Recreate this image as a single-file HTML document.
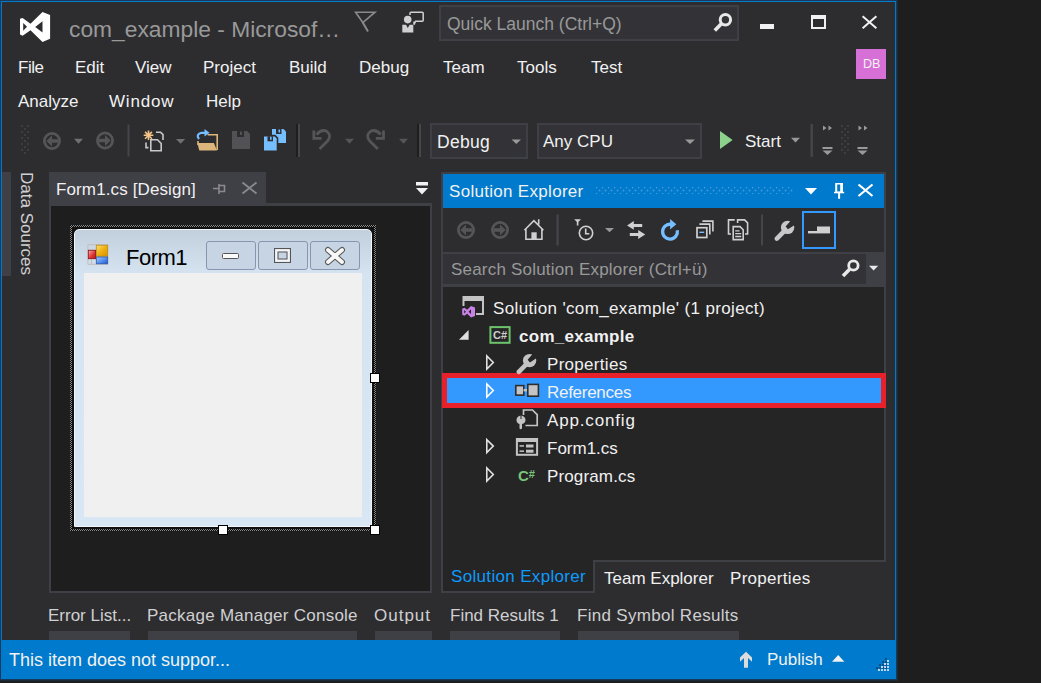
<!DOCTYPE html>
<html><head><meta charset="utf-8">
<style>
*{margin:0;padding:0;box-sizing:border-box}
html,body{width:1041px;height:683px;overflow:hidden;background:#1e1e1e;font-family:"Liberation Sans",sans-serif;}
.a{position:absolute}
svg{position:absolute;overflow:visible}
.t{position:absolute;white-space:nowrap;color:#f1f1f1;font-size:17px;line-height:20px}
#win{position:absolute;left:1px;top:1px;width:895px;height:678px;background:#2d2d30;border:1px solid #007acc;box-shadow:0 0 0 1px #17395a,0 0 0 2px #1a2c3a;}
</style></head><body>
<div id="win"></div>

<!-- ===== TITLE BAR ===== -->
<svg style="left:0;top:0" width="1" height="1">
 <path fill="#fff" fill-rule="evenodd" d="M42.5 12 L50.1 15 L50.1 38.8 L42.5 42 L30.5 30.3 L22.6 35.8 L20 34.6 L20 18.8 L22.6 18 L30.5 23.8 Z M23.2 22.9 L23.2 30.8 L27 26.8 Z M42.5 21.2 L42.5 32.6 L35.2 26.9 Z"/>
</svg>
<div class="t" style="left:69px;top:16px;font-size:22.8px;line-height:26px;color:#999">com_example - Microsof…</div>

<!-- feedback flag -->
<svg style="left:0;top:0" width="1" height="1">
 <path fill="none" stroke="#8a8a8a" stroke-width="1.6" d="M355.6 12.2 H375 L362.8 22.5 Z"/>
 <path fill="none" stroke="#8a8a8a" stroke-width="2" d="M362.8 22.5 L368 31.5"/>
</svg>
<!-- person chat -->
<svg style="left:0;top:0" width="1" height="1">
 <circle cx="407.7" cy="19.6" r="3.8" fill="#d0d0d0"/>
 <path fill="#d0d0d0" d="M402.3 24.8 H406 L407.8 28 L409.6 24.8 H413.3 V32.6 H402.3 Z"/>
 <path fill="none" stroke="#d0d0d0" stroke-width="1.5" d="M410 15 V13.3 Q410 12.3 411 12.3 H422.2 Q423.2 12.3 423.2 13.3 V20.2 Q423.2 21.2 422.2 21.2 H415.6 L414 24.6 V21.5"/>
</svg>

<!-- quick launch -->
<div class="a" style="left:439px;top:5px;width:300px;height:36px;background:#333337;border:2px solid #3f3f46"></div>
<div class="t" style="left:447px;top:14px;color:#999;font-size:17.5px">Quick Launch (Ctrl+Q)</div>
<svg style="left:0;top:0" width="1" height="1">
 <circle cx="725.4" cy="19.8" r="5.2" fill="none" stroke="#e8e8e8" stroke-width="3"/>
 <path d="M721.4 23.8 L714.8 30.4" stroke="#e8e8e8" stroke-width="3.6"/>
</svg>
<!-- window buttons -->
<div class="a" style="left:760px;top:24px;width:14px;height:5px;background:#f1f1f1"></div>
<div class="a" style="left:811px;top:15px;width:15px;height:14px;border:2px solid #f1f1f1;border-top-width:4px"></div>
<svg style="left:0;top:0" width="1" height="1">
 <path d="M862.6 16.2 L876.4 28.2 M876.4 16.2 L862.6 28.2" stroke="#f1f1f1" stroke-width="2"/>
</svg>

<!-- ===== MENU ===== -->
<div class="t" style="left:18px;top:58px;letter-spacing:-0.5px">File</div>
<div class="t" style="left:75px;top:58px">Edit</div>
<div class="t" style="left:135px;top:58px">View</div>
<div class="t" style="left:203px;top:58px">Project</div>
<div class="t" style="left:289px;top:58px">Build</div>
<div class="t" style="left:359px;top:58px">Debug</div>
<div class="t" style="left:443px;top:58px">Team</div>
<div class="t" style="left:517px;top:58px">Tools</div>
<div class="t" style="left:591px;top:58px">Test</div>
<div class="t" style="left:18px;top:92px">Analyze</div>
<div class="t" style="left:109px;top:92px;letter-spacing:0.8px">Window</div>
<div class="t" style="left:206px;top:92px">Help</div>
<div class="a" style="left:856px;top:49px;width:30px;height:30px;background:#d670d6"></div>
<div class="t" style="left:863px;top:54px;font-size:12.6px">DB</div>

<!-- ===== TOOLBAR ===== -->
<svg style="left:0;top:0" width="1" height="1">
 <g fill="#3e3e42">
  <rect x="21" y="125" width="2" height="2"/><rect x="27" y="125" width="2" height="2"/>
  <rect x="24" y="128" width="2" height="2"/>
  <rect x="21" y="131" width="2" height="2"/><rect x="27" y="131" width="2" height="2"/>
  <rect x="24" y="134" width="2" height="2"/>
  <rect x="21" y="137" width="2" height="2"/><rect x="27" y="137" width="2" height="2"/>
  <rect x="24" y="140" width="2" height="2"/>
  <rect x="21" y="143" width="2" height="2"/><rect x="27" y="143" width="2" height="2"/>
  <rect x="24" y="146" width="2" height="2"/>
  <rect x="21" y="149" width="2" height="2"/><rect x="27" y="149" width="2" height="2"/>
  <rect x="24" y="152" width="2" height="2"/>
 </g>
 <!-- back -->
 <circle cx="52" cy="141" r="7.6" fill="none" stroke="#555558" stroke-width="2.8"/>
 <path fill="#555558" d="M46.3 141 L52 135.6 V139.2 H58 V142.8 H52 V146.4 Z"/>
 <path fill="#707074" d="M74 138.7 H83 L78.5 143.7 Z"/>
 <!-- forward -->
 <circle cx="105" cy="140.5" r="7.6" fill="none" stroke="#555558" stroke-width="2.8"/>
 <path fill="#555558" d="M110.7 140.5 L105 135.1 V138.7 H99 V142.3 H105 V145.9 Z"/>
 <!-- sep -->
 <rect x="127.5" y="124.5" width="2" height="32" fill="#46464a"/>
 <!-- new project -->
 <g stroke="#f2c587" stroke-width="1.6">
  <path d="M148.5 130.5 V140.1 M143.7 135.3 H153.3 M145.1 131.9 L151.9 138.7 M151.9 131.9 L145.1 138.7"/>
 </g>
 <path fill="none" stroke="#c8c8c8" stroke-width="1.6" d="M156 132.3 H160.6 L163 134.7 V140 M146 142.5 V147.6 H148.5"/>
 <path fill="#2d2d30" stroke="#c8c8c8" stroke-width="1.6" d="M150.8 139.8 H157.5 L161.2 143.5 V150.8 H150.8 Z"/>
 <path fill="#707074" d="M176 138.9 H185.2 L180.6 143.8 Z"/>
 <!-- open -->
 <path fill="none" stroke="#dcb67a" stroke-width="1.6" d="M207.6 134.8 H217.2 V150 M198 141 V145"/>
 <path fill="#dcb67a" d="M197.3 143 H213.9 L217 150.5 H199.3 Z"/>
 <path fill="none" stroke="#75beff" stroke-width="2.2" d="M199 139 Q195.5 134.5 201.5 132.8 H205.5"/>
 <path fill="#75beff" d="M204.5 129 L209.5 132.8 L204.5 136.6 Z"/>
 <!-- save -->
 <path fill="#525256" d="M232 131 H247 L250 134 V149 H232 Z"/>
 <rect x="237" y="131" width="7" height="6" fill="#2d2d30"/><rect x="240" y="131.5" width="2" height="3.5" fill="#525256"/>
 <!-- save all -->
 <path fill="#75beff" d="M272 129 H283.5 L286 131.5 V143 H272 Z"/>
 <rect x="276" y="129" width="5.5" height="5" fill="#2d2d30"/><rect x="278.5" y="129.5" width="1.6" height="3" fill="#75beff"/>
 <path fill="#75beff" stroke="#2d2d30" stroke-width="1.6" d="M263.2 135.6 H275 L277.5 138.1 V151.2 H263.2 Z"/>
 <rect x="267.5" y="136.3" width="5.5" height="5" fill="#2d2d30"/><rect x="270" y="136.8" width="1.6" height="3" fill="#75beff"/>
 <!-- sep -->
 <rect x="296" y="124" width="2" height="33" fill="#1e1e1e"/><rect x="298" y="124" width="2" height="33" fill="#46464a"/>
 <!-- undo -->
 <path fill="none" stroke="#555558" stroke-width="2.8" d="M319.5 149 L327.5 141 Q332 135.5 327 131.5 Q322 128.5 316.5 134.5"/>
 <path fill="none" stroke="#555558" stroke-width="2.8" stroke-linejoin="miter" d="M313.8 130.5 V138.3 H321.5"/>
 <path fill="#555558" d="M345 138.8 H354 L349.5 143.8 Z"/>
 <!-- redo -->
 <path fill="none" stroke="#555558" stroke-width="2.8" d="M377.8 149 L369.8 141 Q365.3 135.5 370.3 131.5 Q375.3 128.5 380.8 134.5"/>
 <path fill="none" stroke="#555558" stroke-width="2.8" stroke-linejoin="miter" d="M383.5 130.5 V138.3 H375.8"/>
 <path fill="#555558" d="M399 138.8 H408 L403.5 143.8 Z"/>
 <!-- sep -->
 <rect x="417" y="124" width="2" height="33" fill="#1e1e1e"/><rect x="419" y="124" width="2" height="33" fill="#46464a"/>
</svg>

<!-- combos -->
<div class="a" style="left:430px;top:123px;width:98px;height:36px;background:#333337;border:2px solid #3f3f46"></div>
<div class="t" style="left:437px;top:132px;font-size:17.5px;letter-spacing:0.3px">Debug</div>
<svg style="left:0;top:0" width="1" height="1"><path fill="#999" d="M511.6 139.5 H521 L516.3 143.9 Z"/></svg>
<div class="a" style="left:537px;top:123px;width:165px;height:36px;background:#333337;border:2px solid #3f3f46"></div>
<div class="t" style="left:543px;top:132px">Any CPU</div>
<svg style="left:0;top:0" width="1" height="1"><path fill="#999" d="M685 139.5 H695 L690 143.9 Z"/></svg>
<svg style="left:0;top:0" width="1" height="1">
 <path fill="#8cd28c" d="M720 131 L732.6 140 L720 149 Z"/>
 <path fill="#999" d="M791 137.8 H800 L795.5 142.5 Z"/>
 <rect x="810.5" y="124" width="2.4" height="33" fill="#46464a"/>
 <g fill="#999">
  <path d="M823 125.5 L826.5 128 L823 130.5 Z M828.5 125.5 L832 128 L828.5 130.5 Z"/>
  <rect x="822.5" y="147" width="10" height="2"/>
  <path d="M822.5 150.5 H832.5 L827.5 155 Z"/>
  <path d="M858.5 125.5 L862 128 L858.5 130.5 Z M864 125.5 L867.5 128 L864 130.5 Z"/>
  <rect x="857.5" y="147" width="10" height="2"/>
  <path d="M857.5 150.5 H867.5 L862.5 155 Z"/>
 </g>
 <g fill="#3e3e42">
  <rect x="841" y="125" width="2" height="2"/><rect x="847" y="125" width="2" height="2"/>
  <rect x="844" y="128" width="2" height="2"/>
  <rect x="841" y="131" width="2" height="2"/><rect x="847" y="131" width="2" height="2"/>
  <rect x="844" y="134" width="2" height="2"/>
  <rect x="841" y="137" width="2" height="2"/><rect x="847" y="137" width="2" height="2"/>
  <rect x="844" y="140" width="2" height="2"/>
  <rect x="841" y="143" width="2" height="2"/><rect x="847" y="143" width="2" height="2"/>
  <rect x="844" y="146" width="2" height="2"/>
  <rect x="841" y="149" width="2" height="2"/><rect x="847" y="149" width="2" height="2"/>
  <rect x="844" y="152" width="2" height="2"/>
 </g>
</svg>
<div class="t" style="left:745px;top:132px">Start</div>

<!-- ===== LEFT STRIP ===== -->
<div class="a" style="left:2px;top:172px;width:9px;height:104px;background:#3f3f46"></div>
<div class="t" style="left:16px;top:172px;writing-mode:vertical-rl;color:#d0d0d0">Data Sources</div>

<!-- ===== DOC WELL ===== -->
<div class="a" style="left:49px;top:172px;width:217px;height:34px;background:#3f3f46"></div>
<div class="t" style="left:56px;top:180px;letter-spacing:0.12px">Form1.cs [Design]</div>
<svg style="left:0;top:0" width="1" height="1">
 <path fill="none" stroke="#8a8a8e" stroke-width="1.6" d="M213 188.5 H219 M219 184 V194 M219 185.5 H224.5 V191.5 H219"/>
 <path d="M242.5 182.5 L256.5 193.5 M256.5 182.5 L242.5 193.5" stroke="#8a8a8e" stroke-width="1.8"/>
 <rect x="416" y="182" width="12" height="3.5" fill="#f1f1f1"/>
 <path fill="#f1f1f1" d="M416 188 H428 L422 194.5 Z"/>
</svg>
<div class="a" style="left:49px;top:203px;width:383px;height:390px;background:#1e1e1e;border-left:2px solid #3f3f46;border-top:3px solid #3f3f46;border-right:2px solid #3f3f46;border-bottom:2px solid #3f3f46"></div>

<!-- form -->
<svg style="left:0;top:0" width="1" height="1"><defs><pattern id="ck" x="0" y="0" width="2" height="2" patternUnits="userSpaceOnUse"><rect width="2" height="2" fill="#0a0a0a"/><rect x="0" y="0" width="1" height="1" fill="#8a8a8a"/><rect x="1" y="1" width="1" height="1" fill="#8a8a8a"/></pattern></defs>
<rect x="70" y="225" width="306" height="306" fill="#111"/>
<path fill="url(#ck)" fill-rule="evenodd" d="M70 225 H376 V531 H70 Z M72 227 V529 H374 V227 Z"/></svg>
<div class="a" style="left:74px;top:229px;width:298px;height:298px;border-radius:5px 5px 0 0;border:1px solid #f2f6fb;background:linear-gradient(#c2d0de,#d6e3f1 45px,#d9e6f3)"></div>
<div class="a" style="left:84px;top:273px;width:278px;height:244px;background:#f0f0f0"></div>
<svg style="left:0;top:0" width="1" height="1">
 <defs>
 <linearGradient id="gy" x1="0" y1="0" x2="1" y2="1"><stop offset="0" stop-color="#fbe27a"/><stop offset=".5" stop-color="#f0b010"/><stop offset="1" stop-color="#d89000"/></linearGradient>
 <linearGradient id="gr" x1="0" y1="0" x2="1" y2="1"><stop offset="0" stop-color="#f8b0b0"/><stop offset=".6" stop-color="#e03030"/><stop offset="1" stop-color="#c01818"/></linearGradient>
 <linearGradient id="gb" x1="0" y1="0" x2="1" y2="1"><stop offset="0" stop-color="#a8c8fa"/><stop offset=".6" stop-color="#4a88ea"/><stop offset="1" stop-color="#2050c0"/></linearGradient>
</defs>
 <path fill="none" stroke="#c4bcbc" stroke-width="1" d="M87.9 244.7 H107.5 V264.3 H87.9 Z M87.9 250 H96 M91.5 259 V264.3"/>
 <rect x="96.3" y="245.2" width="11.4" height="11" fill="url(#gy)" stroke="#b88a10" stroke-width="0.8"/>
 <rect x="96.3" y="257" width="11.4" height="6.8" fill="url(#gb)" stroke="#2a58b0" stroke-width="0.8"/>
 <rect x="88.3" y="250.3" width="7.3" height="8.4" fill="url(#gr)" stroke="#8a1010" stroke-width="0.8"/>
</svg>
<div class="t" style="left:126px;top:246px;color:#000;font-size:22px;line-height:24px;letter-spacing:-0.5px">Form1</div>
<div class="a" style="left:206px;top:241px;width:50px;height:29px;border:1px solid #8796b0;border-radius:3px;background:#c7d4e4"></div>
<div class="a" style="left:258px;top:241px;width:50px;height:29px;border:1px solid #8796b0;border-radius:3px;background:#c7d4e4"></div>
<div class="a" style="left:310px;top:241px;width:50px;height:29px;border:1px solid #8796b0;border-radius:3px;background:#c7d4e4"></div>
<svg style="left:0;top:0" width="1" height="1">
 <rect x="222.5" y="253.5" width="16" height="5" rx="1" fill="#fafafa" stroke="#555" stroke-width="1"/>
 <rect x="274.5" y="248.5" width="16" height="14" fill="none" stroke="#555" stroke-width="1"/>
 <rect x="276.5" y="250.5" width="12" height="10" fill="none" stroke="#f5f5f5" stroke-width="2.4"/>
 <rect x="278" y="252" width="9" height="7" fill="none" stroke="#555" stroke-width="1"/>
 <path d="M328 250 L342 262 M342 250 L328 262" stroke="#5a5a5a" stroke-width="6" stroke-linecap="round"/>
 <path d="M328 250 L342 262 M342 250 L328 262" stroke="#f8f8f8" stroke-width="3.8" stroke-linecap="round"/>
</svg>
<!-- handles -->
<div class="a" style="left:218px;top:525px;width:10px;height:10px;background:#fff;border:1px solid #000"></div>
<div class="a" style="left:370px;top:525px;width:10px;height:10px;background:#fff;border:1px solid #000"></div>
<div class="a" style="left:370px;top:373px;width:10px;height:10px;background:#fff;border:1px solid #000"></div>

<!-- ===== SOLUTION EXPLORER ===== -->
<div class="a" style="left:441px;top:172px;width:445px;height:390px;background:#2d2d30;border:2px solid #3f3f46"></div>
<div class="a" style="left:443px;top:174px;width:441px;height:34px;background:#007acc"></div>
<div class="t" style="left:449px;top:182px;letter-spacing:0.3px">Solution Explorer</div>
<svg style="left:0;top:0" width="1" height="1"><defs><pattern id="hd" x="596" y="187" width="6" height="6" patternUnits="userSpaceOnUse"><rect x="-0.3" y="-0.3" width="1.6" height="1.6" fill="#4a9cdc"/><rect x="2.7" y="2.7" width="1.6" height="1.6" fill="#4a9cdc"/></pattern></defs><rect x="596" y="187" width="197" height="7" fill="url(#hd)"/></svg>
<svg style="left:0;top:0" width="1" height="1">
 <path fill="#fff" d="M805 188 H817 L811 194.5 Z"/>
 <path fill="#fff" fill-rule="evenodd" d="M835.2 183.1 H843 V192 H835.2 Z M837.2 184.4 V191.6 H840.2 V184.4 Z"/>
 <rect x="834" y="191.8" width="10.2" height="1.5" fill="#fff"/>
 <rect x="838.1" y="193" width="2" height="5.8" fill="#fff"/>
 <path d="M858.5 184.5 L872.5 196 M872.5 184.5 L858.5 196" stroke="#fff" stroke-width="2.2"/>
</svg>

<!-- SE toolbar -->
<svg style="left:0;top:0" width="1" height="1">
 <circle cx="466" cy="230" r="7.6" fill="none" stroke="#555558" stroke-width="2.8"/>
 <path fill="#555558" d="M460.3 230 L466 224.6 V228.2 H472 V231.8 H466 V235.4 Z"/>
 <circle cx="500" cy="230" r="7.6" fill="none" stroke="#555558" stroke-width="2.8"/>
 <path fill="#555558" d="M505.7 230 L500 224.6 V228.2 H494 V231.8 H500 V235.4 Z"/>
 <!-- home -->
 <path fill="none" stroke="#d0d0d0" stroke-width="1.6" d="M524.4 230.2 L533.9 220.7 L543.4 230.2 M525.9 229 V239.3 H541.9 V229 M538.7 219.3 V224.5"/>
 <rect x="531.4" y="232.3" width="5.3" height="7.5" fill="#d0d0d0"/>
 <rect x="556.5" y="214.5" width="2.2" height="31" fill="#46464a"/>
 <!-- filter clock -->
 <path fill="#d0d0d0" d="M574.2 219.3 H581 L577.6 222.8 Z"/>
 <rect x="576.8" y="222" width="1.6" height="3.5" fill="#d0d0d0"/>
 <circle cx="586" cy="233" r="6.7" fill="none" stroke="#d0d0d0" stroke-width="1.6"/>
 <path fill="none" stroke="#d0d0d0" stroke-width="1.6" d="M585.7 228.4 V233.7 H589.3"/>
 <path fill="#999" d="M605 228 H614 L609.5 232.3 Z"/>
 <!-- sync -->
 <path fill="#d0d0d0" d="M627.1 225.4 L633.8 221.1 V224.1 H642.2 V226.9 H633.8 V229.8 Z"/>
 <path fill="#d0d0d0" d="M645.2 234.4 L638.2 230.1 V233 H629.8 V235.9 H638.2 V238.9 Z"/>
 <!-- refresh -->
 <path fill="none" stroke="#75beff" stroke-width="3.3" d="M671.5 224.4 A7.4 7.4 0 1 0 677.3 230.3"/>
 <path fill="#75beff" d="M670.1 219 L676.3 224.2 L670.1 229.4 Z"/>
 <!-- collapse -->
 <path fill="none" stroke="#d0d0d0" stroke-width="1.6" d="M699.4 224.1 H709.8 V234.5 M702.4 221.1 H712.9 V231.5"/>
 <rect x="697" y="227.7" width="9.8" height="9.8" fill="#2d2d30" stroke="#d0d0d0" stroke-width="1.7"/>
 <rect x="699.4" y="231.6" width="4.8" height="1.4" fill="#75beff"/>
 <!-- copy pages -->
 <path fill="none" stroke="#d0d0d0" stroke-width="1.6" d="M734.7 219.9 H728.5 V234 H731 M737.6 223 V219.9 H744.6 L747.6 222.9 V234 H745"/>
 <path fill="#2d2d30" stroke="#d0d0d0" stroke-width="1.6" d="M733.2 226.6 H740 L743.2 229.8 V239.6 H733.2 Z"/>
 <path stroke="#d0d0d0" stroke-width="1.3" d="M735.2 230.8 H739.5 M735.2 233.6 H741.2 M735.2 236.5 H741.2"/>
 <rect x="761" y="214.5" width="2" height="31" fill="#46464a"/>
 <!-- wrench -->
 <g id="wr" fill="#c8c8c8">
  <path d="M776.8 238.6 L785 230.4" stroke="#c8c8c8" stroke-width="4.6" stroke-linecap="round"/>
  <circle cx="787.6" cy="227.4" r="6.7"/>
 </g>
 <path fill="#2d2d30" d="M785.6 226.5 L788 229.2 L793.9 225.4 L797 222 L792 217 L789.8 221.7 Z"/>
</svg>
<div class="a" style="left:802px;top:211px;width:34px;height:38px;border:2px solid #3399ff"></div>
<svg style="left:0;top:0" width="1" height="1">
 <rect x="808" y="231" width="22" height="2.4" fill="#d0d0d0"/>
 <rect x="817" y="226.5" width="13" height="6.5" fill="#d0d0d0"/>
</svg>

<!-- search -->
<div class="a" style="left:443px;top:252px;width:441px;height:35px;background:#333337;border-top:2px solid #3f3f46;border-bottom:3px solid #3f3f46"></div>
<div class="a" style="left:866px;top:254px;width:18px;height:30px;background:#3f3f46"></div>
<div class="t" style="left:451px;top:260px;color:#999;letter-spacing:0.2px">Search Solution Explorer (Ctrl+ü)</div>
<svg style="left:0;top:0" width="1" height="1">
 <circle cx="853.4" cy="265.5" r="4.7" fill="none" stroke="#e8e8e8" stroke-width="2.8"/>
 <path d="M849.6 269.3 L843 275.9" stroke="#e8e8e8" stroke-width="3.6"/>
 <path fill="#e8e8e8" d="M869 265.7 H878.2 L873.6 270.6 Z"/>
</svg>

<!-- tree -->
<div class="a" style="left:443px;top:287px;width:441px;height:273px;background:#252526"></div>
<div class="a" style="left:442px;top:373px;width:444px;height:35px;background:#3399ff;border:5px solid #e8202a"></div>

<svg style="left:0;top:0" width="1" height="1">
 <!-- solution icon -->
 <path fill="#c4c4c4" d="M462.5 296 H484 V315 H476 V313 H482 V301 H464.5 V306 H462.5 Z"/>
 <path fill="#c982e6" fill-rule="evenodd" d="M471 306 L475 307.6 V315.9 L471 317.5 L467.2 313.8 L464.3 315.8 L462.2 314.8 V308.7 L464.3 307.7 L467.2 309.7 Z M464.2 310 V313.4 L466 311.7 Z M471 309.3 L468.6 311.7 L471 314.1 Z"/>
 <!-- expanded triangle -->
 <path fill="#e0e0e0" d="M459 339.7 H468.6 V330 Z"/>
 <!-- C# proj -->
 <rect x="490.4" y="327.1" width="19.2" height="15.7" fill="#252526" stroke="#6cc36c" stroke-width="2"/>
 <!-- collapsed triangles -->
 <g fill="none" stroke="#e0e0e0" stroke-width="1.6">
  <path d="M486.8 356 V369 L493.3 362.5 Z"/>
  <path d="M486.8 439.6 V452.6 L493.3 446.1 Z"/>
  <path d="M486.8 468 V481 L493.3 474.5 Z"/>
 </g>
 <path fill="none" stroke="#fff" stroke-width="1.6" d="M486.8 384 V397 L493.3 390.5 Z"/>
 <!-- wrench properties -->
 <g transform="translate(-258,133.2)">
  <path d="M776.8 238.6 L785 230.4" stroke="#c4c4c4" stroke-width="4.6" stroke-linecap="round"/>
  <circle cx="787.6" cy="227.4" r="6.7" fill="#c4c4c4"/>
  <path fill="#252526" d="M785.6 226.5 L788 229.2 L793.9 225.4 L797 222 L792 217 L789.8 221.7 Z"/>
 </g>
 <!-- references -->
 <rect x="515.8" y="385.6" width="8" height="9.5" fill="#c4c4c4" stroke="#2d2d30" stroke-width="1.6"/>
 <rect x="523.6" y="389" width="4" height="2.4" fill="#c4c4c4"/>
 <rect x="527.8" y="384.4" width="10.6" height="11.8" fill="#c4c4c4" stroke="#2d2d30" stroke-width="1.6"/>
 <!-- app config -->
 <path fill="none" stroke="#c4c4c4" stroke-width="1.7" d="M523.5 415 V410 H532.5 L537.2 414.7 V425.5 H525.5"/>
 <path fill="#c4c4c4" d="M520.5 415.5 Q516.5 416.5 516.5 420 Q516.5 423 519.5 424 V428.5 Q520.5 429.8 522 428.5 V424 Q525.5 423 525.5 420 Q525.5 416.5 521.5 415.5 V419 H520.5 Z"/>
 <!-- form icon -->
 <rect x="516.9" y="439" width="20.2" height="15.8" fill="none" stroke="#c4c4c4" stroke-width="2"/>
 <rect x="516" y="438" width="22" height="4" fill="#c4c4c4"/>
 <rect x="519.5" y="445.2" width="4.5" height="1.5" fill="#c4c4c4"/>
 <rect x="526" y="444.5" width="7.5" height="3" fill="#c4c4c4"/>
 <rect x="519.5" y="450.4" width="4.5" height="1.5" fill="#c4c4c4"/>
 <rect x="526" y="449.7" width="7.5" height="3" fill="#c4c4c4"/>
</svg>
<div class="t" style="left:493px;top:328px;font-size:11px;line-height:14px;color:#d0d0d0;font-weight:bold">C#</div>
<div class="t" style="left:518px;top:466px;font-size:15px;line-height:16px;color:#7ac47a;font-weight:bold">C<span style="font-size:11px;vertical-align:3px">#</span></div>

<div class="t" style="left:493px;top:299px;letter-spacing:0.36px">Solution 'com_example' (1 project)</div>
<div class="t" style="left:519px;top:327px;font-weight:bold;letter-spacing:0.27px">com_example</div>
<div class="t" style="left:547px;top:355px;letter-spacing:0.3px">Properties</div>
<div class="t" style="left:547px;top:383px;letter-spacing:-0.28px">References</div>
<div class="t" style="left:547px;top:411px;letter-spacing:0.84px">App.config</div>
<div class="t" style="left:547px;top:439px">Form1.cs</div>
<div class="t" style="left:547px;top:467px;letter-spacing:0.14px">Program.cs</div>

<!-- SE tabs -->
<div class="a" style="left:441px;top:560px;width:154px;height:33px;background:#252526;border:2px solid #3f3f46;border-top:none"></div>
<div class="t" style="left:451px;top:567px;color:#0d9bfd;letter-spacing:0.33px">Solution Explorer</div>
<div class="t" style="left:604px;top:569px">Team Explorer</div>
<div class="t" style="left:730px;top:569px;letter-spacing:0.3px">Properties</div>

<!-- bottom tabs -->
<div class="t" style="left:48px;top:606px;color:#d0d0d0">Error List...</div>
<div class="t" style="left:147px;top:606px;color:#d0d0d0;letter-spacing:0.25px">Package Manager Console</div>
<div class="t" style="left:374px;top:606px;color:#d0d0d0;letter-spacing:1px">Output</div>
<div class="t" style="left:450px;top:606px;color:#d0d0d0">Find Results 1</div>
<div class="t" style="left:577px;top:606px;color:#d0d0d0;letter-spacing:0.3px">Find Symbol Results</div>
<div class="a" style="left:49px;top:631px;width:81px;height:9px;background:#3f3f46"></div>
<div class="a" style="left:148px;top:631px;width:209px;height:9px;background:#3f3f46"></div>
<div class="a" style="left:375px;top:631px;width:57px;height:9px;background:#3f3f46"></div>
<div class="a" style="left:450px;top:631px;width:110px;height:9px;background:#3f3f46"></div>
<div class="a" style="left:578px;top:631px;width:161px;height:9px;background:#3f3f46"></div>

<!-- ===== STATUS BAR ===== -->
<div class="a" style="left:1px;top:640px;width:895px;height:38px;background:#007acc"></div>
<div class="t" style="left:9px;top:650px;font-size:18px">This item does not suppor...</div>
<svg style="left:0;top:0" width="1" height="1">
 <path fill="#dcdcdc" d="M746 651.8 L752 657.5 V661.7 L748 658 V667.8 H744 V658 L740 661.7 V657.5 Z"/>
 <path fill="#f1f1f1" d="M832 661.8 H844.4 L838.2 655 Z"/>
 <g fill="#0a4f85"><rect x="885" y="658" width="2" height="2"/><rect x="882" y="661" width="2" height="2"/><rect x="885" y="661" width="2" height="2"/><rect x="879" y="664" width="2" height="2"/><rect x="882" y="664" width="2" height="2"/><rect x="885" y="664" width="2" height="2"/><rect x="876" y="667" width="2" height="2"/><rect x="879" y="667" width="2" height="2"/><rect x="882" y="667" width="2" height="2"/><rect x="885" y="667" width="2" height="2"/></g>
 <g fill="#bcd8f0"><rect x="887" y="660" width="2" height="2"/><rect x="884" y="663" width="2" height="2"/><rect x="887" y="663" width="2" height="2"/><rect x="881" y="666" width="2" height="2"/><rect x="884" y="666" width="2" height="2"/><rect x="887" y="666" width="2" height="2"/><rect x="878" y="669" width="2" height="2"/><rect x="881" y="669" width="2" height="2"/><rect x="884" y="669" width="2" height="2"/><rect x="887" y="669" width="2" height="2"/></g>
</svg>
<div class="t" style="left:767px;top:650px">Publish</div>
</body></html>
